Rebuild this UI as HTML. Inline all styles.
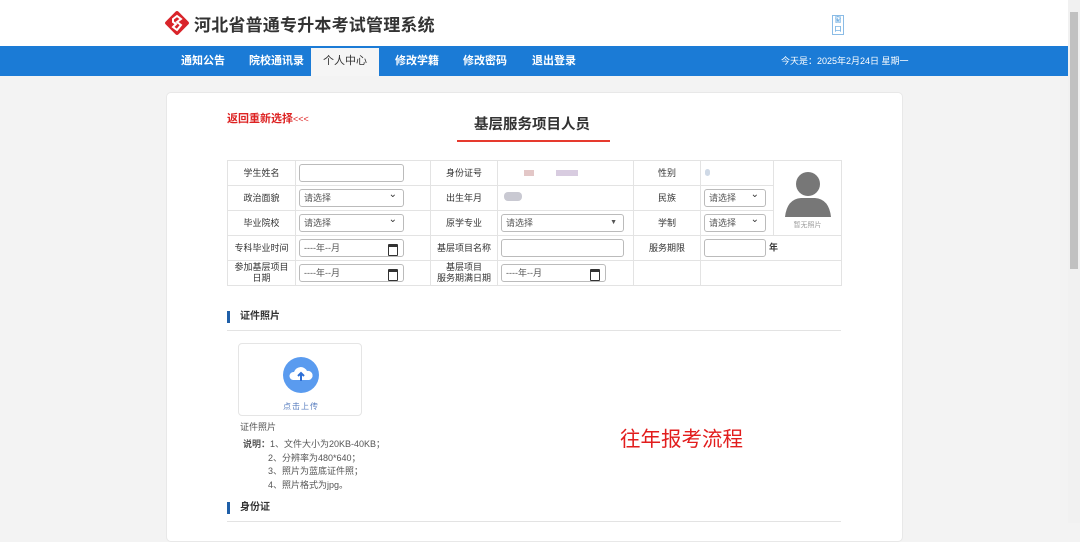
<!DOCTYPE html>
<html><head><meta charset="utf-8"><style>
*{margin:0;padding:0;box-sizing:border-box}
body{width:1080px;height:523px;overflow:hidden;background:#f3f3f3;font-family:"Liberation Sans","Noto Sans CJK SC",sans-serif;position:relative;color:#333}
.a{position:absolute}
.top{left:0;top:0;width:1068px;height:46px;background:#fff}
.nav{left:0;top:46px;width:1068px;height:30px;background:#1b7bd6}
.nav span{position:absolute;top:0;line-height:30px;font-size:11px;color:#fff;font-weight:bold}
.card{left:166px;top:92px;width:737px;height:450px;background:#fff;border:1px solid #e8e8e8;border-radius:5px}
table{position:absolute;left:227px;top:160px;border-collapse:collapse;font-size:9px;color:#333}
td{border:1px solid #e3e3e3;height:25px;text-align:center;padding:0;line-height:11px}
.in{display:block;height:18px;border:1px solid #bbb;border-radius:3px;background:#fff;margin:0 3px;text-align:left;font-size:9px;line-height:16px;padding-left:4px;color:#555;position:relative}
.sel:after{content:"⌄";position:absolute;right:6px;top:-3px;font-size:10px;color:#333}
.date:after{content:"";position:absolute;right:5px;top:4px;width:8px;height:8px;border:1.5px solid #333;border-top-width:3px;border-radius:1px}
.sec{font-size:10px;font-weight:bold;color:#333;padding-left:10px;border-left:3px solid #1f5fa8;line-height:12px}
.sb{left:1068px;top:0;width:12px;height:523px;background:#f1f1f1}
</style></head><body>
<div class="a top"></div>
<svg class="a" style="left:164px;top:10px" width="26" height="26" viewBox="0 0 26 26"><rect x="4" y="4" width="18" height="18" rx="2" transform="rotate(45 13 13)" fill="#d9242a"/><path d="M9 9 L13 6 L17 9 L13 12 L17 15 L13 20 L9 17 L12 14 L9 12 Z" fill="none" stroke="#fff" stroke-width="2"/></svg>
<div class="a" style="left:194px;top:11px;font-size:17px;font-weight:bold;color:#333;letter-spacing:0.2px">河北省普通专升本考试管理系统</div>
<div class="a" style="left:832px;top:15px;width:12px;height:20px;border:1px solid #8bbce6;font-size:7px;color:#3a8fd6;line-height:9px;text-align:center">窗<br>口</div>
<div class="a nav">
<span style="left:181px">通知公告</span><span style="left:249px">院校通讯录</span>
<span style="left:311px;width:68px;top:2px;height:28px;background:#f5f5f5;color:#333;text-align:center;font-weight:normal;line-height:26px">个人中心</span>
<span style="left:395px">修改学籍</span><span style="left:463px">修改密码</span><span style="left:532px">退出登录</span>
<span style="left:781px;font-weight:normal;font-size:9px">今天是：2025年2月24日 星期一</span>
</div>
<div class="a card"></div>
<div class="a" style="left:227px;top:110px;font-size:11px;font-weight:bold;color:#d22">返回重新选择<span style="font-weight:normal;font-size:9px">&lt;&lt;&lt;</span></div>
<div class="a" style="left:474px;top:113px;font-size:14.5px;font-weight:bold;color:#333">基层服务项目人员</div>
<div class="a" style="left:457px;top:140px;width:153px;height:2px;background:#e63a2e"></div>
<table>
<tr><td style="width:68px">学生姓名</td><td style="width:135px"><span class="in" style="width:105px"></span></td><td style="width:67px">身份证号</td><td style="width:136px;text-align:left"><span style="display:inline-block;margin-left:26px;width:10px;height:6px;background:#e3c7c7"></span><span style="display:inline-block;margin-left:22px;width:22px;height:6px;background:#d8cce0"></span></td><td style="width:67px">性别</td><td style="width:73px;text-align:left"><span style="display:inline-block;margin-left:4px;width:5px;height:7px;background:#cfd9e6;border-radius:3px"></span></td>
<td rowspan="3" style="width:68px;vertical-align:top"><svg width="54" height="52" viewBox="0 0 54 52" style="margin-top:8px"><circle cx="27" cy="15" r="12" fill="#777"/><path d="M4 48 Q6 30 20 29 L34 29 Q48 30 50 48 Z" fill="#777"/></svg><div style="font-size:7px;color:#999;margin-top:-4px">暂无照片</div></td></tr>
<tr><td>政治面貌</td><td><span class="in sel" style="width:105px">请选择</span></td><td>出生年月</td><td style="text-align:left"><span style="display:inline-block;margin-left:6px;width:18px;height:9px;background:#c9c9d2;border-radius:4px"></span></td><td>民族</td><td><span class="in sel" style="width:62px">请选择</span></td></tr>
<tr><td>毕业院校</td><td><span class="in sel" style="width:105px">请选择</span></td><td>原学专业</td><td><span class="in" style="width:123px">请选择<b style="position:absolute;right:6px;top:0;font-size:7px">▼</b></span></td><td>学制</td><td><span class="in sel" style="width:62px">请选择</span></td></tr>
<tr><td>专科毕业时间</td><td><span class="in date" style="width:105px">----年--月</span></td><td>基层项目名称</td><td><span class="in" style="width:123px"></span></td><td>服务期限</td><td colspan="2" style="text-align:left"><span class="in" style="width:62px;display:inline-block;vertical-align:middle"></span><b style="font-size:9px">年</b></td></tr>
<tr><td>参加基层项目<br>日期</td><td><span class="in date" style="width:105px">----年--月</span></td><td>基层项目<br>服务期满日期</td><td><span class="in date" style="width:105px">----年--月</span></td><td></td><td colspan="2"></td></tr>
</table>
<div class="a sec" style="left:227px;top:311px">证件照片</div>
<div class="a" style="left:227px;top:330px;width:614px;height:1px;background:#e3e3e3"></div>
<div class="a" style="left:238px;top:343px;width:124px;height:73px;border:1px solid #e5e5e5;border-radius:4px;background:#fff"></div>
<svg class="a" style="left:283px;top:357px" width="36" height="36" viewBox="0 0 36 36"><circle cx="18" cy="18" r="18" fill="#5a9bef"/><path d="M10 23 a4 4 0 0 1 1-8 a7 7 0 0 1 13-1 a4.5 4.5 0 0 1 2 9 Z" fill="#fff"/><path d="M18 24 v-7 M15 19 l3-3 3 3" stroke="#2d6fd6" stroke-width="2" fill="none"/></svg>
<div class="a" style="left:283px;top:401px;font-size:8px;color:#5a7fc0;letter-spacing:1px">点击上传</div>
<div class="a" style="left:240px;top:420px;font-size:9px;color:#555">证件照片</div>
<div class="a" style="left:243px;top:438px;font-size:9px;color:#555;line-height:13.5px"><b>说明：</b>1、文件大小为20KB-40KB；<br><span style="padding-left:25px">2、分辨率为480*640；</span><br><span style="padding-left:25px">3、照片为蓝底证件照；</span><br><span style="padding-left:25px">4、照片格式为jpg。</span></div>
<div class="a" style="left:620px;top:422px;font-size:20.5px;color:#e21d1d">往年报考流程</div>
<div class="a sec" style="left:227px;top:502px">身份证</div>
<div class="a" style="left:227px;top:521px;width:614px;height:1px;background:#e3e3e3"></div>
<div class="a sb"><div style="position:absolute;left:2px;top:12px;width:8px;height:257px;background:#c1c1c1"></div></div>
</body></html>
